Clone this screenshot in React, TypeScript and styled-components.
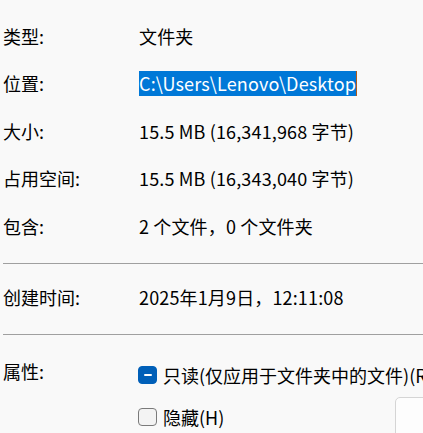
import React from "react";
import styled, { createGlobalStyle } from "styled-components";

const Global = createGlobalStyle`
  html, body { margin: 0; padding: 0; background: #f9f9f9; }
  body { overflow: hidden; }
  #root { width: 423px; height: 433px; overflow: hidden; }
`;

const Page = styled.div`
  position: relative;
  width: 423px;
  height: 433px;
  background: #f9f9f9;
  font-family: "Noto Sans CJK SC", "Noto Sans", sans-serif;
  font-size: 18px;
  color: #000;
  padding: 12px 0 0 3px;
  box-sizing: border-box;
  overflow: hidden;
`;

const Row = styled.div<{ $h?: number }>`
  display: grid;
  grid-template-columns: 136px 1fr;
  align-items: center;
  height: ${(p) => p.$h ?? 47.5}px;
  white-space: nowrap;
`;

const Label = styled.div`
  line-height: 24px;
`;

const Value = styled.div`
  line-height: 24px;
  letter-spacing: 0.15px;
`;

const Selected = styled.span`
  display: inline-block;
  background: #0078d7;
  color: #fff;
  line-height: 25px;
  height: 25px;
  border-right: 1px solid #b05a1a;
`;

const Divider = styled.div<{ $mt: number; $mb: number }>`
  height: 1px;
  background: #a0a0a0;
  margin: ${(p) => p.$mt}px 0 ${(p) => p.$mb}px 0;
`;

const AttrRow = styled.div`
  display: grid;
  grid-template-columns: 135px 1fr;
  white-space: nowrap;
`;

const AttrLabel = styled.div`
  line-height: 24px;
  padding-top: 24px;
`;

const Checks = styled.div`
  display: flex;
  flex-direction: column;
  gap: 18px;
  padding-top: 28px;
  overflow: hidden;
`;

const Check = styled.div`
  display: flex;
  align-items: center;
  gap: 6px;
  line-height: 24px;
`;

const Box = styled.span<{ $on?: boolean }>`
  flex: none;
  width: 19px;
  height: 18px;
  box-sizing: border-box;
  border-radius: 4px;
  border: 1px solid ${(p) => (p.$on ? "#005fb8" : "#7a7a7a")};
  background: ${(p) => (p.$on ? "#005fb8" : "#f3f3f3")};
  display: flex;
  align-items: center;
  justify-content: center;
`;

const Dash = styled.span`
  width: 8px;
  height: 2px;
  background: #fff;
  border-radius: 1px;
`;

const Panel = styled.div`
  position: absolute;
  left: 395px;
  top: 397px;
  width: 60px;
  height: 60px;
  background: #fdfdfd;
  border: 1px solid #d5d5d5;
  border-radius: 5px;
`;

export default function App() {
  return (
    <Page>
      <Global />
      <Row>
        <Label>类型:</Label>
        <Value>文件夹</Value>
      </Row>
      <Row>
        <Label>位置:</Label>
        <Value>
          <Selected>C:\Users\Lenovo\Desktop</Selected>
        </Value>
      </Row>
      <Row>
        <Label>大小:</Label>
        <Value>15.5 MB (16,341,968 字节)</Value>
      </Row>
      <Row>
        <Label>占用空间:</Label>
        <Value>15.5 MB (16,343,040 字节)</Value>
      </Row>
      <Row>
        <Label>包含:</Label>
        <Value>2 个文件，0 个文件夹</Value>
      </Row>
      <Divider $mt={13} $mb={10} />
      <Row>
        <Label>创建时间:</Label>
        <Value>2025年1月9日，12:11:08</Value>
      </Row>
      <Divider $mt={13} $mb={0} />
      <AttrRow>
        <AttrLabel>属性:</AttrLabel>
        <Checks>
          <Check>
            <Box $on>
              <Dash />
            </Box>
            <span>只读(仅应用于文件夹中的文件)(R)</span>
          </Check>
          <Check>
            <Box />
            <span>隐藏(H)</span>
          </Check>
        </Checks>
      </AttrRow>
      <Panel />
    </Page>
  );
}
